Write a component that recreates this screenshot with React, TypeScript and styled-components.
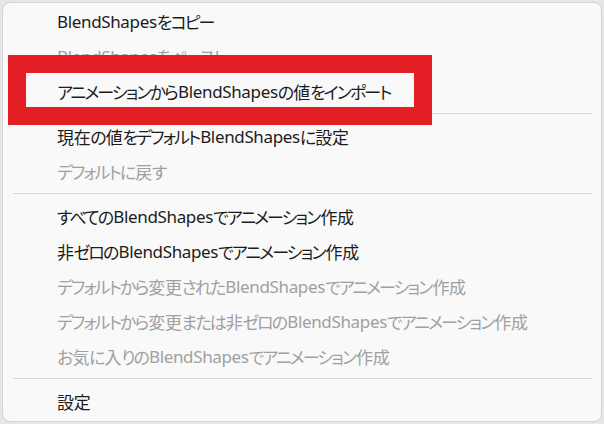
import * as React from 'react';
import styled, { createGlobalStyle } from 'styled-components';

type Entry =
  | { kind: 'item'; label: string; disabled?: boolean }
  | { kind: 'sep' };

const entries: Entry[] = [
  { kind: 'item', label: 'BlendShapesをコピー' },
  { kind: 'item', label: 'BlendShapesをペースト', disabled: true },
  { kind: 'item', label: 'アニメーションからBlendShapesの値をインポート' },
  { kind: 'sep' },
  { kind: 'item', label: '現在の値をデフォルトBlendShapesに設定' },
  { kind: 'item', label: 'デフォルトに戻す', disabled: true },
  { kind: 'sep' },
  { kind: 'item', label: 'すべてのBlendShapesでアニメーション作成' },
  { kind: 'item', label: '非ゼロのBlendShapesでアニメーション作成' },
  { kind: 'item', label: 'デフォルトから変更されたBlendShapesでアニメーション作成', disabled: true },
  { kind: 'item', label: 'デフォルトから変更または非ゼロのBlendShapesでアニメーション作成', disabled: true },
  { kind: 'item', label: 'お気に入りのBlendShapesでアニメーション作成', disabled: true },
  { kind: 'sep' },
  { kind: 'item', label: '設定' },
];

const GlobalStyle = createGlobalStyle`
  html, body {
    margin: 0;
    padding: 0;
    background: #e6e6e6;
  }
`;

const Page = styled.div`
  width: 604px;
  height: 424px;
  box-sizing: border-box;
  padding: 2px;
`;

const Menu = styled.div`
  position: relative;
  height: 100%;
  box-sizing: border-box;
  background: #f9f9f9;
  border: 1px solid #d4d4d4;
  border-radius: 8px;
  padding-top: 1px;
  display: flex;
  flex-direction: column;
  font-family: "Noto Sans", "Noto Sans CJK JP", sans-serif;
  font-feature-settings: "palt";
`;

const Item = styled.div<{ $disabled?: boolean }>`
  height: 35px;
  flex: 0 0 35px;
  display: flex;
  align-items: center;
  padding-left: 54px;
  font-size: 17px;
  letter-spacing: -0.35px;
  color: ${p => (p.$disabled ? '#a0a0a0' : '#1c1c1c')};
  white-space: nowrap;
`;

// kana in the original font are narrower than in Noto Sans CJK
const Kana = styled.span`
  letter-spacing: -1.9px;
  margin-right: 1px;
`;

const Separator = styled.div`
  flex: 0 0 auto;
  height: 1px;
  margin: 4px 9px 5px 10px;
  background: #d9d9d9;
`;

const Highlight = styled.div`
  position: absolute;
  left: 5px;
  top: 52px;
  width: 424px;
  height: 70px;
  box-sizing: border-box;
  border: 18px solid #e31e24;
  pointer-events: none;
`;

const renderLabel = (label: string) =>
  label.split(/([\u3040-\u30ff]+)/).filter(Boolean).map((part, i) =>
    /[\u3040-\u30ff]/.test(part) ? <Kana key={i}>{part}</Kana> : <span key={i}>{part}</span>
  );

export default function App() {
  return (
    <Page>
      <GlobalStyle />
      <Menu>
        {entries.map((e, i) =>
          e.kind === 'sep'
            ? <Separator key={i} />
            : <Item key={i} $disabled={e.disabled}>{renderLabel(e.label)}</Item>
        )}
        <Highlight />
      </Menu>
    </Page>
  );
}
